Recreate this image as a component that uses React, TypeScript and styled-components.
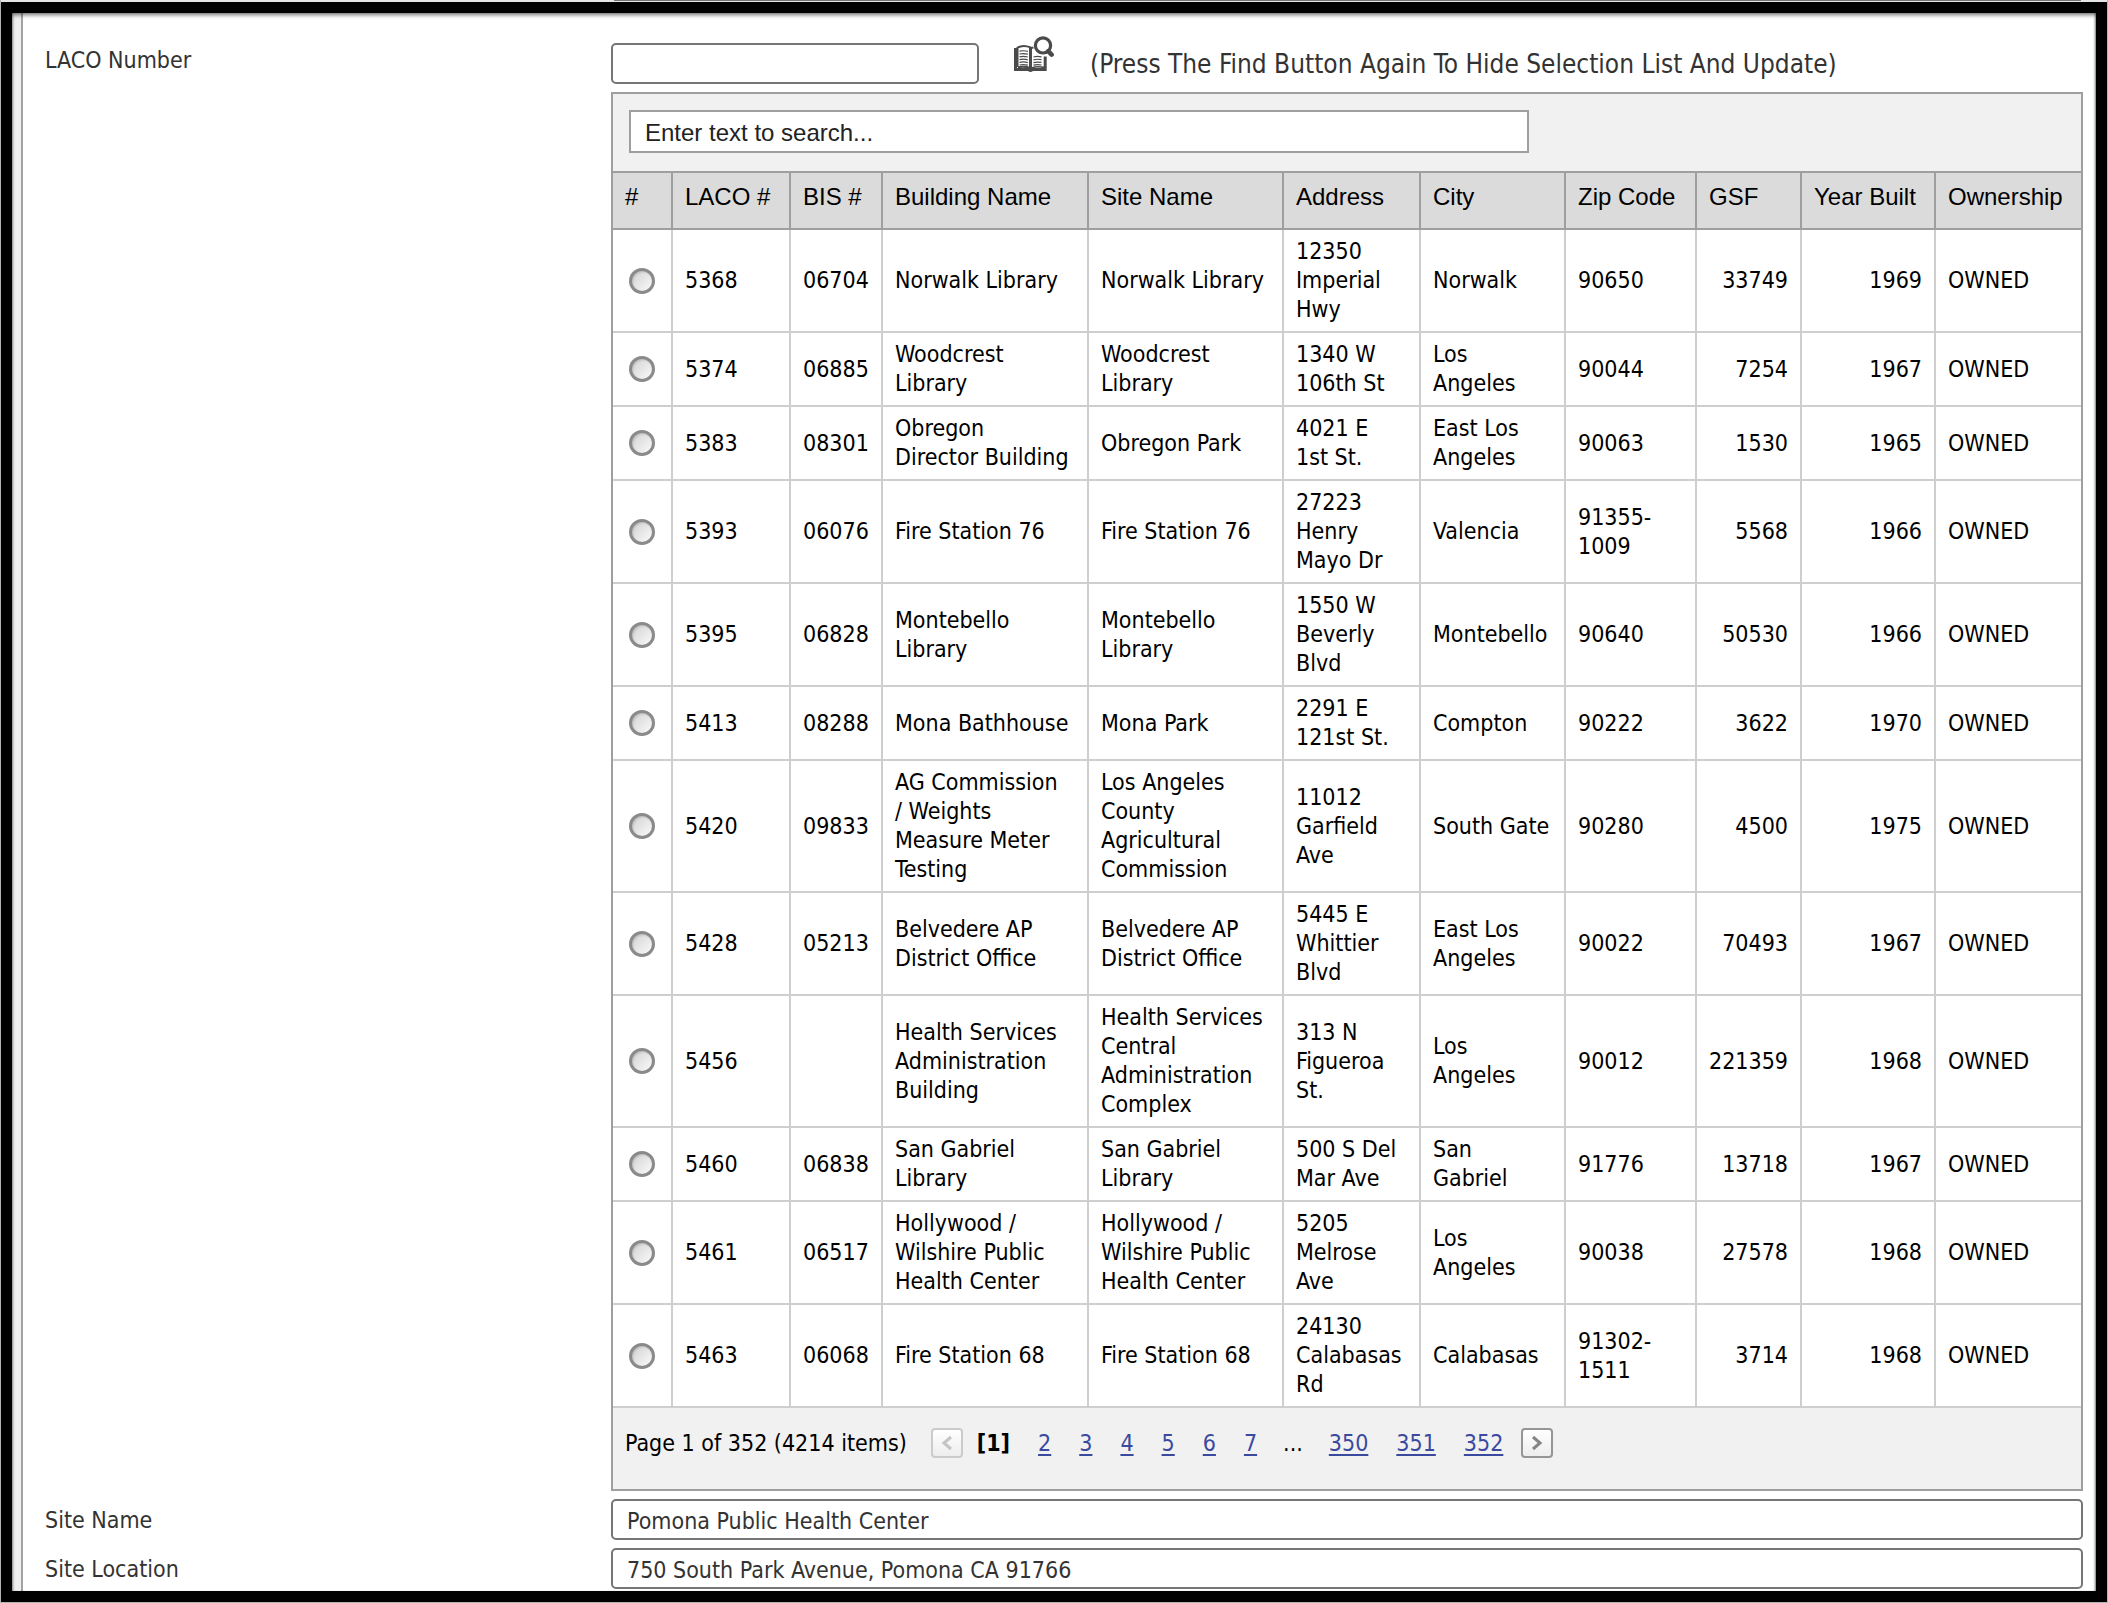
import React from 'react';
import styled, { createGlobalStyle } from 'styled-components';

const uiFont = `'DejaVu Sans Condensed', 'DejaVu Sans', sans-serif`;
const headFont = `'Liberation Sans', Arial, sans-serif`;
const line = '#9f9f9f';
const softLine = '#cecece';

const GlobalStyle = createGlobalStyle`
  *, *::before, *::after { box-sizing: border-box; }
  body {
    margin: 0;
    background: #fff;
    color: #000;
    font-family: ${uiFont};
    font-size: 23px;
    line-height: 29px;
  }
`;

const Page = styled.div`
  min-height: 100vh;
  display: flex;
  flex-direction: column;
  padding: 0 1px 1px;
  background: #b4b4b4;
`;

const PreviousFieldEdge = styled.div`
  height: 2px;
  padding-left: 613px;
  padding-right: 26px;
  background: #e4e6e6;

  &::before {
    content: '';
    display: block;
    height: 1px;
    background: #767676;
  }
`;

const Frame = styled.main`
  flex: 1;
  padding: 23px 13px 1px 33px;
  border: 11px solid #000;
  background: linear-gradient(to right, #eeeeee 9px, #a3a3a3 9px, #a3a3a3 11px, #ffffff 11px);
  box-shadow: inset 0 3px 4px -1px rgba(0, 0, 0, 0.55), inset 2px 0 2px -1px rgba(0, 0, 0, 0.3),
    inset -2px 0 2px -1px rgba(0, 0, 0, 0.4);
`;

const Form = styled.form`
  display: grid;
  grid-template-columns: 566px minmax(0, 1fr);
  row-gap: 8px;
`;

const FieldLabel = styled.label<{ $top: number }>`
  padding-top: ${({ $top }) => $top}px;
  color: #333;
`;

const LookupField = styled.div`
  display: flex;
  flex-direction: column;
  gap: 8px;
`;

const LookupRow = styled.div`
  display: flex;
  align-items: flex-start;
`;

const TextInput = styled.input`
  width: 100%;
  height: 41px;
  padding: 3px 14px 0;
  border: 2px solid #767676;
  border-radius: 5px;
  background: #fff;
  color: #333;
  font-family: ${uiFont};
  font-size: 23px;
`;

const LacoInput = styled(TextInput)`
  width: 368px;
  margin-top: 7px;
`;

const FindButton = styled.button`
  margin-left: 35px;
  padding: 0;
  border: 0;
  background: none;
  line-height: 0;
  cursor: pointer;
`;

const Hint = styled.span`
  margin-left: 36px;
  padding-top: 13px;
  color: #333;
  font-size: 26px;
  line-height: 30px;
`;

const Panel = styled.section`
  border: 2px solid ${line};
  background: #f1f1f1;
`;

const SearchBar = styled.div`
  padding: 16px 16px 18px;
`;

const SearchInput = styled.input`
  display: block;
  width: 900px;
  max-width: 100%;
  height: 43px;
  padding: 2px 14px 0;
  border: 2px solid ${line};
  border-radius: 0;
  background: #fff;
  font-family: ${headFont};
  font-size: 24px;

  &::placeholder {
    color: #222;
    opacity: 1;
  }
`;

const Grid = styled.table`
  width: 100%;
  table-layout: fixed;
  border-spacing: 0;
  background: #fff;
`;

const HeadCell = styled.th`
  padding: 10px 12px 17px;
  border: solid ${line};
  border-width: 2px 2px 2px 0;
  background: #dbdbdb;
  font-family: ${headFont};
  font-size: 24px;
  font-weight: normal;
  line-height: 28px;
  text-align: left;
  white-space: nowrap;

  &:last-child { border-right: 0; }
`;

const Cell = styled.td<{ $align?: 'left' | 'right' | 'center' }>`
  padding: 7px 12px;
  border: solid ${softLine};
  border-width: 0 2px 2px 0;
  text-align: ${({ $align = 'left' }) => $align};
  vertical-align: middle;
  white-space: pre-line;

  &:last-child { border-right: 0; }
`;

const Radio = styled.input`
  appearance: none;
  display: block;
  width: 26px;
  height: 26px;
  margin: 0 auto;
  border: 3px solid #8a8a8a;
  border-radius: 50%;
  background: linear-gradient(135deg, #d2d2d2, #fafafa);
  box-shadow: inset 1px 1px 2px rgba(0, 0, 0, 0.15);

  &:checked { background: radial-gradient(#444 0 5px, #eee 6px); }
`;

const Pager = styled.nav`
  display: flex;
  align-items: center;
  padding: 20px 12px 31px;
`;

const CurrentPage = styled.span`
  padding: 0 14px;
  font-weight: bold;
`;

const Ellipsis = styled.span`
  padding: 0 12px;
`;

const PagerLink = styled.a`
  margin: 0 14px;
  color: #394a9f;
  text-decoration: underline;
  text-decoration-thickness: 2px;
  text-underline-offset: 3px;
`;

const PagerButton = styled.button<{ $side: 'prev' | 'next' }>`
  display: flex;
  align-items: center;
  justify-content: center;
  width: 32px;
  height: 30px;
  margin-left: ${({ $side }) => ($side === 'prev' ? 24 : 4)}px;
  padding: 0;
  border: 2px solid #959595;
  border-radius: 4px;
  background: linear-gradient(#ffffff, #ededed);
  color: #858585;

  &:disabled {
    border-color: #cbcbcb;
    color: #c4c4c4;
  }
`;

type Column = { title: string; width: number; align?: 'right' };

const columns: Column[] = [
  { title: '#', width: 60 },
  { title: 'LACO #', width: 118 },
  { title: 'BIS #', width: 92 },
  { title: 'Building Name', width: 206 },
  { title: 'Site Name', width: 195 },
  { title: 'Address', width: 137 },
  { title: 'City', width: 145 },
  { title: 'Zip Code', width: 131 },
  { title: 'GSF', width: 105, align: 'right' },
  { title: 'Year Built', width: 134, align: 'right' },
  { title: 'Ownership', width: 145 },
];

const rows: string[][] = [
  ['5368', '06704', 'Norwalk Library', 'Norwalk Library', '12350 Imperial Hwy', 'Norwalk', '90650', '33749', '1969', 'OWNED'],
  ['5374', '06885', 'Woodcrest Library', 'Woodcrest Library', '1340 W 106th St', 'Los Angeles', '90044', '7254', '1967', 'OWNED'],
  ['5383', '08301', 'Obregon\nDirector Building', 'Obregon Park', '4021 E\n1st St.', 'East Los Angeles', '90063', '1530', '1965', 'OWNED'],
  ['5393', '06076', 'Fire Station 76', 'Fire Station 76', '27223 Henry Mayo Dr', 'Valencia', '91355-1009', '5568', '1966', 'OWNED'],
  ['5395', '06828', 'Montebello Library', 'Montebello Library', '1550 W Beverly Blvd', 'Montebello', '90640', '50530', '1966', 'OWNED'],
  ['5413', '08288', 'Mona Bathhouse', 'Mona Park', '2291 E 121st St.', 'Compton', '90222', '3622', '1970', 'OWNED'],
  ['5420', '09833', 'AG Commission\n/ Weights\nMeasure Meter\nTesting', 'Los Angeles County Agricultural Commission', '11012 Garfield Ave', 'South Gate', '90280', '4500', '1975', 'OWNED'],
  ['5428', '05213', 'Belvedere AP District Office', 'Belvedere AP District Office', '5445 E Whittier Blvd', 'East Los Angeles', '90022', '70493', '1967', 'OWNED'],
  ['5456', '', 'Health Services Administration Building', 'Health Services Central Administration Complex', '313 N Figueroa St.', 'Los Angeles', '90012', '221359', '1968', 'OWNED'],
  ['5460', '06838', 'San Gabriel Library', 'San Gabriel Library', '500 S Del Mar Ave', 'San Gabriel', '91776', '13718', '1967', 'OWNED'],
  ['5461', '06517', 'Hollywood / Wilshire Public Health Center', 'Hollywood / Wilshire Public Health Center', '5205 Melrose Ave', 'Los Angeles', '90038', '27578', '1968', 'OWNED'],
  ['5463', '06068', 'Fire Station 68', 'Fire Station 68', '24130 Calabasas Rd', 'Calabasas', '91302-1511', '3714', '1968', 'OWNED'],
];

const BookSearchIcon = () => (
  <svg width="40" height="36" viewBox="0 0 40 36" fill="none" stroke="#4a4a4a" aria-hidden="true">
    <path d="M1.5 12V33.4H14L16.5 34.6L19 33.4H31.2V20.5" strokeWidth="3" />
    <path d="M3.5 31V11.6C7 9.6 12 9.6 16.5 11.4V32C12 30.6 8 30.5 4 31.2" fill="#fff" strokeWidth="2" />
    <path d="M16.5 11.5V33" strokeWidth="3" />
    <path d="M17.5 32C21 30.6 26 30.4 30 31.4" strokeWidth="1.6" />
    <path d="M17 12.2L19.5 11.4" strokeWidth="2" />
    <path
      d="M5.5 15.2Q9.5 14.2 13.8 15.4M5.5 18Q9.5 17 13.8 18.2M5.5 20.8Q9.5 19.8 13.8 21M5.5 23.6Q9.5 22.6 13.8 23.8M5.5 26.4Q9.5 25.4 13.8 26.6M5.5 29Q9.5 28 13.8 29.2M19.5 21Q23 20 27.5 20.8M19.5 23.8Q23 22.8 27.5 23.6M19.5 26.6Q23 25.6 27.5 26.4M19.5 29.2Q23 28.2 27.5 29"
      strokeWidth="1.2"
    />
    <circle cx="29" cy="9.4" r="7.6" strokeWidth="3.2" />
    <path d="M34.2 15.2L37.6 18.6" strokeWidth="4.6" strokeLinecap="round" />
  </svg>
);

const Chevron = ({ back }: { back?: boolean }) => (
  <svg width="14" height="16" viewBox="0 0 14 16" fill="none" stroke="currentColor" strokeWidth="3" aria-hidden="true">
    <path d={back ? 'M11 2L4 8L11 14' : 'M3 2L10 8L3 14'} />
  </svg>
);

export default function App() {
  return (
    <Page>
      <GlobalStyle />
      <PreviousFieldEdge />
      <Frame>
        <Form onSubmit={(e) => e.preventDefault()}>
          <FieldLabel htmlFor="laco" $top={10}>LACO Number</FieldLabel>
          <LookupField>
            <LookupRow>
              <LacoInput id="laco" type="text" />
              <FindButton type="button" aria-label="Find">
                <BookSearchIcon />
              </FindButton>
              <Hint>(Press The Find Button Again To Hide Selection List And Update)</Hint>
            </LookupRow>
            <Panel>
              <SearchBar>
                <SearchInput type="text" aria-label="Search" placeholder="Enter text to search..." />
              </SearchBar>
              <Grid>
                <colgroup>
                  {columns.map((c) => (
                    <col key={c.title} width={c.width} />
                  ))}
                </colgroup>
                <thead>
                  <tr>
                    {columns.map((c) => (
                      <HeadCell key={c.title} scope="col">{c.title}</HeadCell>
                    ))}
                  </tr>
                </thead>
                <tbody>
                  {rows.map((row) => (
                    <tr key={row[0]}>
                      <Cell $align="center">
                        <Radio type="radio" name="building" value={row[0]} aria-label={row[0]} />
                      </Cell>
                      {row.map((value, i) => (
                        <Cell key={columns[i + 1].title} $align={columns[i + 1].align}>{value}</Cell>
                      ))}
                    </tr>
                  ))}
                </tbody>
              </Grid>
              <Pager aria-label="Pages">
                <span>Page 1 of 352 (4214 items)</span>
                <PagerButton type="button" $side="prev" disabled aria-label="Previous page">
                  <Chevron back />
                </PagerButton>
                <CurrentPage aria-current="page">[1]</CurrentPage>
                {[2, 3, 4, 5, 6, 7].map((n) => (
                  <PagerLink key={n} href={`#page-${n}`}>{n}</PagerLink>
                ))}
                <Ellipsis>...</Ellipsis>
                {[350, 351, 352].map((n) => (
                  <PagerLink key={n} href={`#page-${n}`}>{n}</PagerLink>
                ))}
                <PagerButton type="button" $side="next" aria-label="Next page">
                  <Chevron />
                </PagerButton>
              </Pager>
            </Panel>
          </LookupField>

          <FieldLabel htmlFor="site-name" $top={7}>Site Name</FieldLabel>
          <TextInput id="site-name" type="text" defaultValue="Pomona Public Health Center" />

          <FieldLabel htmlFor="site-location" $top={7}>Site Location</FieldLabel>
          <TextInput id="site-location" type="text" defaultValue="750 South Park Avenue, Pomona CA 91766" />
        </Form>
      </Frame>
    </Page>
  );
}
